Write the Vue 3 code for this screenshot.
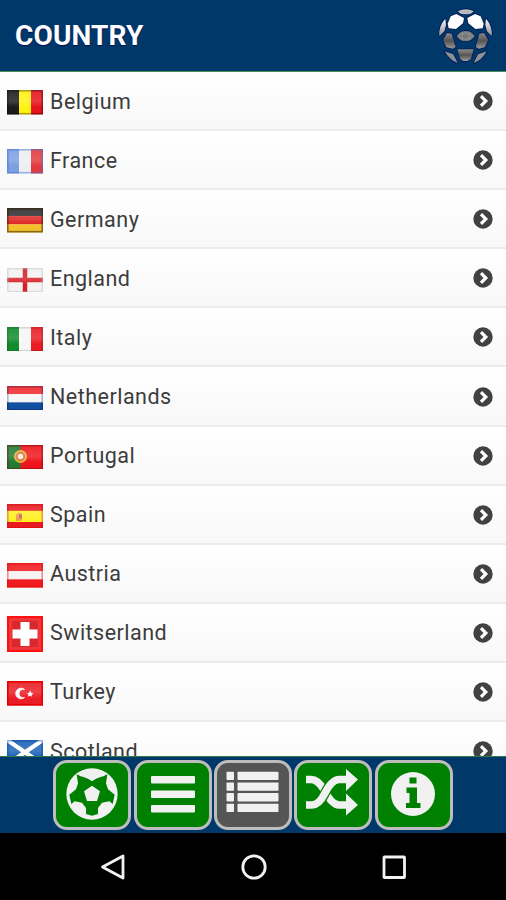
<script setup>
const stripes = (dir, colors) =>
  colors.map((fill, i) =>
    dir === 'v'
      ? { x: i * 12, y: 0, w: 12, h: 24.5, fill }
      : { x: 0, y: (i * 24.5) / 3, w: 36, h: 24.5 / 3 + 0.1, fill }
  )

const countries = [
  { name: 'Belgium', bars: stripes('v', ['#1c1c1c', '#fff210', '#e8121c']), edge: '#00000055' },
  { name: 'France', bars: stripes('v', ['#7c9fe2', '#eceef1', '#e43a3e']), edge: '#3f70d077' },
  { name: 'Germany', bars: stripes('h', ['#303030', '#dc1e1c', '#f3bf2c']), edge: '#30200088' },
  { name: 'England', bars: [], edge: '#bbbbbb66' },
  { name: 'Italy', bars: stripes('v', ['#128c2c', '#f6f6f6', '#ea1c24']), edge: '#00000022' },
  { name: 'Netherlands', bars: stripes('h', ['#f02a30', '#f5f5f8', '#1450a0']), edge: '#00004044' },
  { name: 'Portugal', bars: [], edge: '#70000066' },
  { name: 'Spain', bars: [], edge: '#c0000055' },
  { name: 'Austria', bars: stripes('h', ['#f01c20', '#f5f1f1', '#f01c20']), edge: '#e0000066' },
  { name: 'Switserland', bars: [], square: true },
  { name: 'Turkey', bars: [], edge: '#e80000' },
  { name: 'Scotland', bars: [], edge: '#0040a066' }
]

const tabs = ['ball', 'menu', 'list', 'shuffle', 'info']
</script>

<template>
  <div class="screen">
    <header class="header">
      <h1>COUNTRY</h1>
      <svg class="logo" viewBox="80 18 168 174">
        <defs>
          <linearGradient id="panel" x1="0" y1="0" x2="0" y2="1">
            <stop offset="0" stop-color="#8a8a8a" />
            <stop offset=".5" stop-color="#555" />
            <stop offset="1" stop-color="#999" />
          </linearGradient>
          <linearGradient id="side" x1="0" y1="0" x2="0" y2="1">
            <stop offset="0" stop-color="#fff" />
            <stop offset="1" stop-color="#888" />
          </linearGradient>
        </defs>
        <g stroke="#001c58" stroke-width="5" paint-order="stroke" stroke-linejoin="round">
          <path d="M142 31Q166 18 191 31L181 38Q166 42 151 38Z" fill="#b8bcc0" />
          <path d="M121 46L138 39L161 51L158 67L137 84L115 82L112 68Z" fill="#fff" />
          <path d="M211 46L194 39L171 51L174 67L195 84L217 82L220 68Z" fill="#fff" />
          <path d="M105 53L107 72L102 91L87 106Q84 76 105 53Z" fill="url(#side)" />
          <path d="M227 53L225 72L230 91L244 106Q247 76 227 53Z" fill="url(#side)" />
          <path d="M139 106Q147 90 166 90Q185 90 193 106Q183 121 166 121Q148 121 139 106Z" fill="#747779" />
          <path d="M110 96L124 98L136 138L127 143L108 139L98 117Z" fill="url(#panel)" />
          <path d="M221 96L207 98L196 138L205 143L223 139L234 117Z" fill="url(#panel)" />
          <path d="M141 145H190L182 173L172 180H158L149 173Z" fill="url(#panel)" />
          <path d="M103 151L129 160L142 186Q118 178 103 151Z" fill="#8e9294" />
          <path d="M229 151L203 160L190 186Q215 178 229 151Z" fill="#8e9294" />
        </g>
        <path d="M145 105Q166 86 187 105M145 107Q166 123 187 107M156 94V118M176 94V118" fill="none" stroke="#a0a3a5" stroke-width="2" />
      </svg>
    </header>

    <ul class="countries">
      <li v-for="c in countries" :key="c.name" class="row">
        <svg v-if="c.square" class="flag square" viewBox="0 0 36 36">
          <rect width="36" height="36" fill="#f0363a" />
          <rect x="5" y="5" width="26" height="26" fill="#d8282d" />
          <path d="M13.500 6h9v7.500h8v9h-8V30h-9v-7.500H5.500v-9h8Z" fill="#fff" />
          <rect x="1" y="1" width="34" height="34" fill="none" stroke="#ff1010" stroke-width="2" />
        </svg>
        <svg v-else class="flag" viewBox="0 0 36 24.500" preserveAspectRatio="none">
          <defs>
            <linearGradient id="gloss" x1="0" y1="0" x2="0" y2="1">
              <stop offset="0" stop-color="#fff" stop-opacity=".08" />
              <stop offset=".45" stop-color="#fff" stop-opacity=".16" />
              <stop offset=".7" stop-color="#fff" stop-opacity="0" />
            </linearGradient>
          </defs>
          <rect v-for="(b, i) in c.bars" :key="i" :x="b.x" :y="b.y" :width="b.w" :height="b.h" :fill="b.fill" />
          <g v-if="c.name === 'England'">
            <rect width="36" height="24.500" fill="#f3f3f3" />
            <path d="M18 0V24.500M0 12H36" stroke="#d42026" stroke-width="4.500" />
          </g>
          <g v-else-if="c.name === 'Portugal'">
            <rect width="36" height="24.500" fill="#ee161c" />
            <rect width="13.500" height="24.500" fill="#247a32" />
            <circle cx="13.500" cy="11.500" r="5.700" fill="#d8783c" stroke="#e8bb3e" stroke-width="1.600" />
            <circle cx="13.500" cy="11.500" r="2.700" fill="#f8e8e0" />
          </g>
          <g v-else-if="c.name === 'Spain'">
            <rect width="36" height="24.500" fill="#ea1c20" />
            <rect y="6.800" width="36" height="11.200" fill="#fff01e" />
            <path d="M9 10h2v7H9zM11 9q4-1 4 2v5q-2 2-4 0z" fill="#e89a48" />
            <path d="M12 10l3 1v3h-3z" fill="#d05a4a" />
          </g>
          <g v-else-if="c.name === 'Turkey'">
            <rect width="36" height="24.500" fill="#ea1e26" />
            <path d="M17.500 8.500A5.300 5.300 0 1 0 17.500 16.500A4.200 4.200 0 1 1 17.500 8.500Z" fill="#fff" stroke="#fff" stroke-width=".8" />
            <path d="M20 12.500l2.200-.7 1-2.200 1 2.200 2.300.7-1.900 1.200.2 2.100-1.800-1.300-2 1.300.4-2.200Z" fill="#fff" />
          </g>
          <g v-else-if="c.name === 'Scotland'">
            <rect width="36" height="24.500" fill="#1c62b6" />
            <path d="M0 0L36 24.500M36 0L0 24.500" stroke="#fff" stroke-width="4.200" />
          </g>
          <rect width="36" height="24.500" fill="url(#gloss)" />
          <rect x=".8" y=".8" width="34.400" height="22.900" fill="none" :stroke="c.edge" stroke-width="1.600" />
        </svg>
        <span class="name">{{ c.name }}</span>
        <svg class="go" viewBox="0 0 20 20">
          <circle cx="10" cy="10" r="9.700" fill="#414141" />
          <path d="M8 5.200L12.800 10L8 14.800" fill="none" stroke="#fff" stroke-width="3.200" />
        </svg>
      </li>
    </ul>

    <nav class="tabs">
      <button v-for="t in tabs" :key="t" class="tab" :class="{ active: t === 'list' }" :aria-label="t">
        <svg class="icon" viewBox="0 0 74 66" fill="#f1f1f1">
          <g v-if="t === 'ball'" transform="translate(-3 -4) scale(.33333)">
            <circle cx="120" cy="108" r="77" />
            <path d="M74 49L89 56Q120 52 151 56L166 49L162 76L168 94L188 110L182 138L172 130L150 134L138 150V168L120 173L102 168V150L90 134L68 130L58 138L52 110L72 94L78 76Z" fill="#008000" />
            <path d="M91 50L149 50L146 57L132 62L120 70L108 62L94 57Z" />
            <path d="M120 83L144 100L135 129H105L96 100Z" />
          </g>
          <g v-else-if="t === 'menu'">
            <rect x="15" y="14" width="44" height="7.500" rx="1" />
            <rect x="15" y="28.500" width="44" height="7.500" rx="1" />
            <rect x="15" y="43" width="44" height="7.500" rx="1" />
          </g>
          <g v-else-if="t === 'list'">
            <g v-for="n in 4" :key="n">
              <rect x="10.500" :y="-1 + n * 10.700" width="7.500" height="8.300" rx=".8" />
              <rect x="21.500" :y="-1 + n * 10.700" width="41" height="8.300" rx=".8" />
            </g>
          </g>
          <g v-else-if="t === 'shuffle'">
            <path d="M10 17.500H15Q22 17.500 28 28Q36 43 43 43H53" fill="none" stroke="#f1f1f1" stroke-width="7.500" />
            <path d="M18 43Q24 42 29 31Q36 17.500 43 17.500" fill="none" stroke="#008000" stroke-width="10" />
            <path d="M10 43H16Q23 43 29 31Q36 17.500 43 17.500H53" fill="none" stroke="#f1f1f1" stroke-width="7.500" />
            <path d="M50 7L62 17.500L50 29ZM50 31.500L62 43L50 53.500Z" />
          </g>
          <g v-else>
            <circle cx="36" cy="32" r="22" />
            <path d="M32.500 15.500H39.500V21.500H32.500ZM29.500 25.500H40V41H43.500V46H29V41H32.500V31H29.500Z" fill="#008000" />
          </g>
        </svg>
      </button>
    </nav>

    <footer class="system">
      <svg viewBox="0 0 28 28"><path d="M3.500 14L24 3V25Z" /></svg>
      <svg viewBox="0 0 28 28"><circle cx="14" cy="14" r="11.200" /></svg>
      <svg viewBox="0 0 28 28"><rect x="4" y="4" width="20.500" height="20.500" rx=".5" /></svg>
    </footer>
  </div>
</template>

<style>
body {
  margin: 0;
  background: #000;
}
</style>

<style scoped>
.screen {
  display: flex;
  flex-direction: column;
  width: 506px;
  height: 900px;
  overflow: hidden;
  font-family: Roboto, "Liberation Sans", sans-serif;
}
.header {
  display: flex;
  flex: none;
  box-sizing: border-box;
  height: 72px;
  padding: 0 13px 0 15px;
  align-items: center;
  justify-content: space-between;
  background: #003869;
  border-bottom: 1px solid #4d8b58;
}
h1 {
  margin: 0;
  color: #fff;
  font-size: 28px;
  font-weight: 700;
  letter-spacing: 0.150px;
  line-height: 33px;
  text-shadow: 0 1px 1px #001050;
}
.logo {
  width: 56px;
  height: 58px;
}
.countries {
  flex: 1;
  min-height: 0;
  margin: 0;
  padding: 0;
  overflow: hidden;
  list-style: none;
  background: #fff;
}
.row {
  display: flex;
  box-sizing: border-box;
  height: 59.100px;
  padding: 1px 13px 0 7px;
  align-items: center;
  border-bottom: 2px solid #ebebeb;
  background: linear-gradient(#fff, #f8f8f8);
}
.flag {
  flex: none;
  width: 36px;
  height: 24.500px;
  margin-top: 3px;
}
.flag.square {
  height: 36px;
}
.name {
  flex: 1;
  margin-left: 7px;
  padding-top: 1px;
  color: #3c3c3c;
  font-size: 21.500px;
  font-weight: 400;
  letter-spacing: 0.480px;
  line-height: 26px;
}
.go {
  width: 20px;
  height: 20px;
}
.tabs {
  display: flex;
  flex: none;
  box-sizing: border-box;
  height: 77px;
  padding-top: 3px;
  gap: 2.300px;
  justify-content: center;
  background: #003869;
  border-top: 1px solid #2e7654;
}
.tab {
  display: flex;
  box-sizing: border-box;
  width: 78px;
  height: 70px;
  padding: 0;
  align-items: center;
  justify-content: center;
  border: 3px solid #bdbdbd;
  border-radius: 14px;
  background: #008000;
}
.tab.active {
  background: #555;
}
.icon {
  display: block;
  flex: none;
  width: 74px;
  height: 66px;
}
.system {
  display: flex;
  flex: none;
  height: 67px;
  padding: 0 98px 0 99px;
  align-items: center;
  justify-content: space-between;
  background: #000;
}
.system svg {
  width: 28px;
  height: 28px;
  fill: none;
  stroke: #f2f2f2;
  stroke-width: 2.800;
  stroke-linejoin: round;
}
</style>
